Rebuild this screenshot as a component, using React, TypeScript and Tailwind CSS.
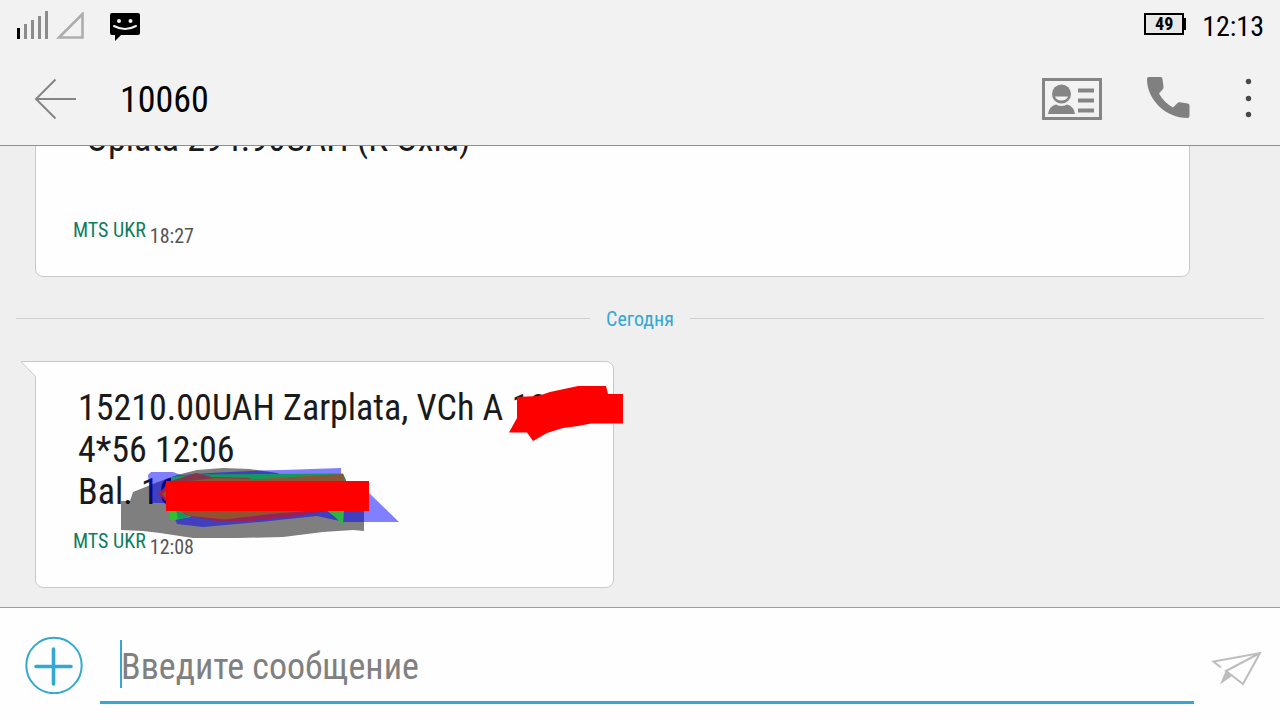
import type { ReactNode } from "react";

const stroke = "#858585";

const SignalIcon = () => (
  <svg className="h-8 w-8" viewBox="0 -1 32 32" aria-hidden="true">
    <path d="M1 17h3v11H1z" fill="#000" />
    <path d="M8 13h3v15H8zM15 9h3v19h-3zM22 5h3v23h-3zM29 0h3v28h-3z" fill="#8c8c8c" />
  </svg>
);

const NoSignalIcon = () => (
  <svg className="h-7 w-7" viewBox="0 0 28 28" aria-hidden="true">
    <path d="M3 25.5 26.5 2v23.5z" fill="none" stroke="#adadad" strokeWidth="2.6" />
  </svg>
);

const MessageIcon = () => (
  <svg className="h-8 w-8" viewBox="-2 -1 32 32" aria-hidden="true">
    <path
      d="M2 2h26a2 2 0 0 1 2 2v18a2 2 0 0 1-2 2H11l-6 6v-6H2a2 2 0 0 1-2-2V4a2 2 0 0 1 2-2z"
      fill="#000"
    />
    <circle cx="9" cy="10" r="2" fill="#f2f2f2" />
    <circle cx="20.5" cy="10" r="2" fill="#f2f2f2" />
    <path d="M4 15q11 6 22 0" fill="none" stroke="#f2f2f2" strokeWidth="2" strokeLinecap="round" />
  </svg>
);

const BackIcon = () => (
  <svg className="h-11 w-11" viewBox="-1 0 44 44" fill="none" stroke={stroke} strokeWidth="2" aria-hidden="true">
    <path d="M22.5 2.5 3 22l19.5 19.5M3 22h40" />
  </svg>
);

const ContactIcon = () => (
  <svg className="h-11 w-15" viewBox="0 0 60 44" aria-hidden="true">
    <rect x="1.5" y="2.5" width="57" height="39" fill="none" stroke={stroke} strokeWidth="3" />
    <circle cx="19.5" cy="17" r="9.5" fill={stroke} />
    <path d="M13 19.5h13q-1.5 4-6.5 4t-6.5-4z" fill="#f2f2f2" />
    <path d="M6 37q1-8 8-9.5 5.5 3 11 0Q32 29 33 37z" fill={stroke} />
    <path d="M36 11.5h16v4H36zM36 21.5h16v4H36zM36 31.5h16v4H36z" fill={stroke} />
  </svg>
);

const PhoneIcon = () => (
  <svg className="h-11 w-11" viewBox="-1 1 44 44" aria-hidden="true">
    <path
      d="M2 1h11.5a2 2 0 0 1 2 2l1 8q0 1.5-1 2.5L12 17.500q5 9 14 14l4.500-4.500q1-1 2.500-.7l7.500 1.200a2 2 0 0 1 2 2V40q0 2-2 2C19 42 0 24 0 3q0-2 2-2z"
      fill="#808080"
    />
  </svg>
);

const MoreIcon = () => (
  <svg className="h-11 w-2" viewBox="0 0 8 44" fill="#4a4a4a" aria-hidden="true">
    <circle cx="4.5" cy="4.5" r="2.7" />
    <circle cx="4.5" cy="21.5" r="2.7" />
    <circle cx="4.5" cy="37.5" r="2.7" />
  </svg>
);

const AddIcon = () => (
  <svg className="h-15 w-15" viewBox="0 -1 60 60" fill="none" stroke="#33a8d3" aria-hidden="true">
    <circle cx="30" cy="30.5" r="27.7" strokeWidth="2" />
    <path d="M12 31.5h35M29.5 14v35" strokeWidth="3.6" strokeLinecap="round" />
  </svg>
);

const SendIcon = () => (
  <svg className="h-11 w-[54px]" viewBox="-1 -8 54 44" fill="none" stroke="#bdbdbd" strokeWidth="2" aria-hidden="true">
    <path d="M10 17.5 2.5 11.500 49 3 32 34 15 21 49 3" />
    <path d="M15 20 9 34.5 21 26z" fill="#bdbdbd" stroke="none" />
  </svg>
);

// pointed upper left corner of an incoming bubble
const Tail = () => (
  <svg className="absolute -top-px -left-4 h-4 w-6" viewBox="0 0 24 16" aria-hidden="true">
    <path d="M1 .5 15.5 15.5H24V.5z" fill="#fefefe" />
    <path d="M24 .5H1l14.5 15" fill="none" stroke="#c9c9c9" />
  </svg>
);

const CodeScribble = () => (
  <svg className="absolute top-6 left-118 h-15 w-30" viewBox="508 386 120 60" aria-hidden="true">
    <path
      d="M517 397 538 396 550 392 564 389 578 386H606L608 394H623V423.5H591L578 426 563 428 547 433 533 441 527 432.5H509L517 418z"
      fill="#fe0000"
    />
  </svg>
);

const BalanceScribble = () => (
  <svg className="absolute top-26 left-21 h-20 w-71" viewBox="120 466 284 80" aria-hidden="true">
    <path
      d="M121 501h9l3-9 25-10 19-7 20-5 26-2 27 1 27 4 87 37v21l-11-1-30 2-40 5-46 1-44 0-33-5-17-2-22-1z"
      fill="#000"
      fillOpacity=".5"
    />
    <path
      d="M148 475l3-3h22l8 3q50-4 102-5l58-2v12l27 12 31 30h-55l-27-6-57 6-57 5-26-3-2-5-8-16h-16z"
      fill="#00f"
      fillOpacity=".5"
    />
    <path d="M171 477 192 474.5 343 473.5 346 480V485H171z" fill="#159760" />
    <path d="M171 481 196 473 212 477 250 478V486H171z" fill="#843548" />
    <path d="M180 482 215 478 260 479 343 474 346 485H180z" fill="#8b5635" />
    <path d="M158 494 170 482V505z" fill="#a51d50" />
    <path d="M162 494 170 488V502z" fill="#8b5230" />
    <path d="M169 510H182L192 513 190 517 175 520H170z" fill="#30c030" />
    <path d="M180 510H330L310 514 290 517 250 521 215 521 185 515z" fill="#9b2057" />
    <path d="M176 510H320L270 514 225 519.5 190 516z" fill="#91522f" />
    <path d="M176 510 190 517 178 519z" fill="#159760" />
    <path d="M326 510H344L343 525 335 517z" fill="#2cb644" />
    <path d="M166 481H369V511H166z" fill="#fe0000" />
  </svg>
);

type MessageProps = {
  text: string;
  time: string;
  className: string;
  children?: ReactNode;
};

const Message = ({ text, time, className, children }: MessageProps) => (
  <article
    className={`relative rounded-lg border border-[#c9c9c9] bg-[#fefefe] pt-[25px] pb-7 pl-9 ${className}`}
  >
    <p className="pl-1.5 text-4xl leading-[42px] whitespace-pre text-[#1a1a1a]">{text}</p>
    {children}
    <div className="relative mt-4 flex gap-1 pl-px text-xl leading-6">
      <span className="text-[#0f7d60]">MTS UKR</span>
      <time className="pt-1.5 text-[#555]">{time}</time>
    </div>
  </article>
);

const App = () => {
  return (
    <div className="flex h-screen flex-col bg-[#efefef] font-['Roboto_Condensed','Roboto','Liberation_Sans',sans-serif]">
      <header className="shrink-0 border-b border-[#8e8e8e] bg-[#f2f2f2]">
        <div className="flex h-13 items-center justify-between px-4">
          <div className="flex items-center gap-2">
            <SignalIcon />
            <NoSignalIcon />
            <div className="pl-4">
              <MessageIcon />
            </div>
          </div>
          <div className="flex items-center gap-4 text-black">
            <div className="flex items-center pb-1">
              <span className="flex h-[22px] w-10 items-center justify-center border-2 border-black bg-[#e8e8e8] text-lg leading-5 font-bold">
                49
              </span>
              <span className="h-3 w-[2px] bg-black" />
            </div>
            <time className="pt-px text-[28px] leading-8">12:13</time>
          </div>
        </div>
        <div className="flex h-[93px] items-center pr-7 pl-8">
          <button type="button" aria-label="Назад">
            <BackIcon />
          </button>
          <h1 className="grow pt-[2px] pl-11 text-4xl text-black">10060</h1>
          <div className="flex items-center gap-11">
            <button type="button" aria-label="Контакт">
              <ContactIcon />
            </button>
            <button type="button" aria-label="Позвонить">
              <PhoneIcon />
            </button>
            <button type="button" aria-label="Ещё" className="pl-2.5">
              <MoreIcon />
            </button>
          </div>
        </div>
      </header>

      <main className="flex min-h-0 grow flex-col justify-end overflow-hidden pb-[19px]">
        <Message text={" Oplata 294.90UAH (K Oxia)\n "} time="18:27" className="mr-[90px] ml-[35px]" />
        <div className="mt-[27px] mb-7 flex items-center gap-4 px-4 text-xl text-[#33a8d3]">
          <span className="h-px grow bg-[#d0d0d0]" />
          <span className="pt-px">Сегодня</span>
          <span className="h-px grow bg-[#d0d0d0]" />
        </div>
        <Message
          text={"15210.00UAH Zarplata, VCh A 18\n4*56 12:06\nBal. 16"}
          time="12:08"
          className="ml-[35px] w-[579px] rounded-tl-none"
        >
          <Tail />
          <CodeScribble />
          <BalanceScribble />
        </Message>
      </main>

      <footer className="flex shrink-0 items-center border-t border-[#9e9e9e] bg-[#fefefe] pr-4 pl-6">
        <button type="button" aria-label="Добавить">
          <AddIcon />
        </button>
        <div className="mx-4 mt-5 mb-4 flex grow border-b-[3px] border-[#33a8d3] pt-3 pb-[13px] pl-5">
          <span className="h-12 w-[2px] bg-[#33a8d3]" />
          <input
            type="text"
            aria-label="Сообщение"
            placeholder="Введите сообщение"
            className="-ml-px min-w-0 grow pt-1.5 text-4xl text-black outline-none placeholder:text-[#808080]"
          />
        </div>
        <button type="button" aria-label="Отправить">
          <SendIcon />
        </button>
      </footer>
    </div>
  );
};

export default App;
